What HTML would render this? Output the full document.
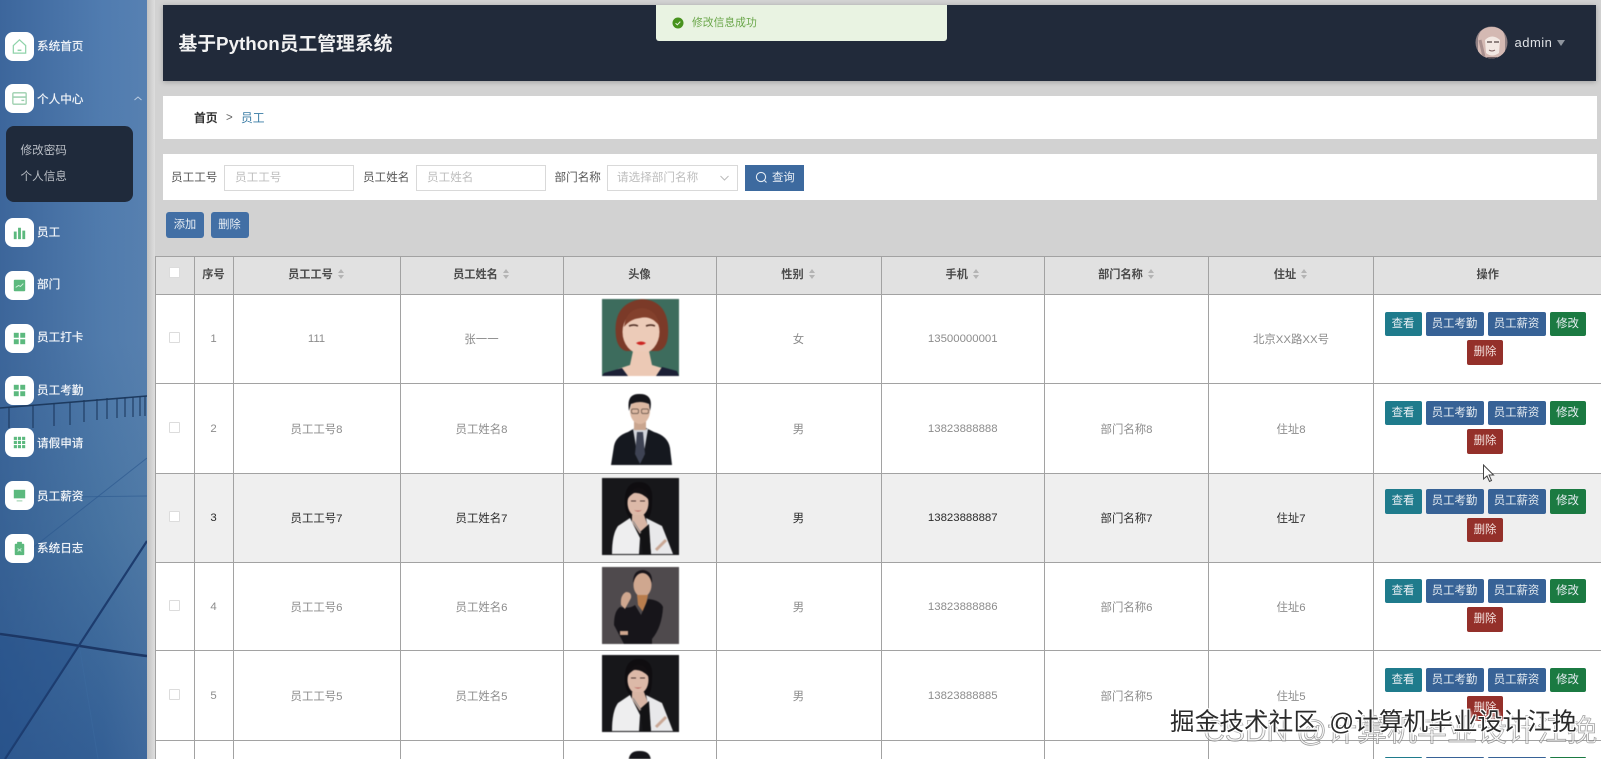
<!DOCTYPE html>
<html lang="zh">
<head>
<meta charset="utf-8">
<title>基于Python员工管理系统</title>
<style>
*{box-sizing:border-box}
html,body{margin:0;padding:0;width:1601px;height:759px;overflow:hidden;background:#d2d2d2}
body{font-family:"Liberation Sans","Noto Sans CJK SC",sans-serif;position:relative}
#all{position:absolute;left:0;top:0;width:1601px;height:759px;overflow:hidden;filter:blur(.35px)}
.abs{position:absolute}
#side{position:absolute;left:0;top:0;width:147px;height:759px;background:linear-gradient(90deg,rgba(45,85,140,.55) 0%,rgba(90,130,175,.1) 70%,rgba(110,145,185,.25) 100%),linear-gradient(180deg,#4f7bb0 0%,#4f7aab 45%,#44719f 70%,#2f5b92 100%)}
#band{position:absolute;left:147px;top:0;width:8px;height:759px;background:linear-gradient(90deg,#c2c2c2,#dedede)}
.ic{position:absolute;left:5px;width:29px;height:29px;background:#fff;border-radius:8px}
.ic svg{position:absolute;left:5px;top:5px;width:19px;height:19px}
.nv{position:absolute;left:37px;font-size:11.6px;color:#f2f5f9;line-height:16px;white-space:nowrap;text-shadow:0 0 .6px #f2f5f9}
#sub{position:absolute;left:5.5px;top:125.5px;width:127.5px;height:76.5px;background:#1f2a3b;border-radius:8px}
#sub div{position:absolute;left:15px;font-size:11.6px;color:#b9bec5;line-height:16px}
#hd{position:absolute;left:163px;top:5px;width:1433px;height:76px;background:#212a3a;box-shadow:0 1px 5px rgba(0,0,0,.25)}
#hd .t{position:absolute;left:15.5px;top:26.5px;font-size:18.8px;font-weight:bold;color:#f2f2f2;line-height:24px;white-space:nowrap}
#toast{position:absolute;left:656px;top:5px;width:291px;height:36px;background:#e9f3e2;border-radius:0 0 3px 3px}
#toast .tx{position:absolute;left:36px;top:11px;font-size:10.8px;color:#6ba74b;line-height:15px}
#bc{position:absolute;left:163px;top:96px;width:1434px;height:43px;background:#fff}
#sr{position:absolute;left:163px;top:154px;width:1434px;height:46px;background:#fff}
.lb{position:absolute;top:170px;font-size:11.6px;line-height:16px;color:#555}
.ip{position:absolute;top:164.5px;height:26px;width:130px;background:#fff;border:1px solid #d9d9d9;font-size:11.6px;color:#bdbdbd;line-height:24px;padding-left:10px;white-space:nowrap}
.pb{position:absolute;top:211.5px;width:38px;height:26px;background:#426fa5;color:#e9eff5;font-size:11.2px;line-height:26px;text-align:center;border-radius:3px}
#tw{position:absolute;left:155px;top:256px;width:1446px;height:503px;overflow:hidden}
table{position:absolute;left:0;top:0;border-collapse:collapse;table-layout:fixed;width:1446px}
th,td{border:1px solid #a2a2a2;text-align:center;padding:0;font-size:11.4px;color:#8c8c8c;font-weight:normal}
th{height:38px;background:#e1e1e1;color:#4a4a4a;font-weight:bold;font-size:11.2px;padding-bottom:3px}
td{background:#fff;vertical-align:middle}
tr.h td{background:#efefef;color:#2b2b2b}
.cb{display:inline-block;width:11px;height:11px;border:1px solid #dcdcdc;background:#fff;border-radius:1px}
.car{display:inline-block;width:7px;height:10px;margin-left:5px;vertical-align:-1px;position:relative}
.car:before{content:"";position:absolute;left:0;top:0;border:3.5px solid transparent;border-top:0;border-bottom:4px solid #b4b4b4}
.car:after{content:"";position:absolute;left:0;bottom:0;border:3.5px solid transparent;border-bottom:0;border-top:4px solid #b4b4b4}
td.pic{vertical-align:top;padding-top:4px}
td.pic svg{display:block;margin:0 auto;width:77px;height:77px;filter:blur(.5px);position:relative;left:1px}
td.op{vertical-align:top;text-align:left}
.ops{width:222px;display:flex;flex-wrap:wrap;justify-content:center;gap:4px 4px}
.b{height:24.5px;line-height:24px;text-align:center;font-size:11.4px;color:#e8eef3;border-radius:2px;white-space:nowrap}
.v{width:37px;background:#1f7b8c}
.k{width:58px;background:#376296}
.e{width:36px;background:#1b7a42}
.d{width:36px;background:#94302a;color:#f3dfdc}
.wm{position:absolute;white-space:nowrap}
tr.last td{height:18px;vertical-align:top;border-bottom:0;padding:0;line-height:0;font-size:0}
tr.last td.pic svg{height:14px;margin-top:4px}
tr.last .ops{padding-top:16px}
tr.last .b{height:1px;border-radius:2px 2px 0 0}
</style>
</head>
<body>
<div id="all">
<div id="side">
<svg class="abs" style="left:0;top:0" width="147" height="759" viewBox="0 0 147 759">
<g stroke="#1d3a5f" fill="none">
<path d="M0 408 L147 396" stroke-width="1.6"/>
<path d="M9 407V428M33 405V428M54 403V426M70 402V425M84 400V422M97 399V420M107 398V419M117 398V418M125 397V417M133 397V417M140 396V416M145 396V416" stroke-width="1.3" opacity=".85"/>
<path d="M0 634 C60 642 100 650 147 656" stroke="#1c3765" stroke-width="2.6"/>
<path d="M5 759 L147 541" stroke="#1d3c6e" stroke-width="2.2"/>
<path d="M30 550 L147 458" stroke="#2d5a90" stroke-width="1" opacity=".7"/>
<path d="M60 497 L147 496" stroke="#2d5a90" stroke-width="1" opacity=".6"/>
<path d="M80 650 L98 759" stroke="#3f6ea3" stroke-width="1" opacity=".4"/>
</g>
<path d="M0 636 L78 646 L5 759 H0Z" fill="#1f4a85" opacity=".3"/>
</svg>

<div class="ic" style="top:32px"><svg viewBox="0 0 20 20" fill="none" stroke="#8fd3aa" stroke-width="1.3"><path d="M3.5 9 L10 3 L16.5 9 V17 H3.5 Z"/><path d="M8 14h4" stroke-width="1.6"/></svg></div>
<div class="nv" style="top:39px">系统首页</div>

<div class="ic" style="top:84px"><svg viewBox="0 0 20 20" fill="none" stroke="#9ccfae" stroke-width="1.4"><rect x="3" y="4" width="14" height="12" rx="1"/><path d="M3 8.5h14" stroke-width="1.6"/><path d="M12 12h3"/></svg></div>
<div class="nv" style="top:92px">个人中心</div>
<svg class="abs" style="left:133px;top:95px" width="10" height="7" viewBox="0 0 10 7" fill="none" stroke="#b9cbe0" stroke-width="1"><path d="M1.5 5 L5 2 L8.5 5"/></svg>

<div id="sub"><div style="top:17px">修改密码</div><div style="top:43px">个人信息</div></div>

<div class="ic" style="top:218px"><svg viewBox="0 0 20 20" fill="#5cb97e"><rect x="4" y="9" width="3" height="8"/><rect x="8.5" y="5" width="3" height="12"/><rect x="13" y="8" width="3" height="9"/></svg></div>
<div class="nv" style="top:225px">员工</div>

<div class="ic" style="top:271px"><svg viewBox="0 0 20 20"><rect x="4" y="4" width="12" height="12" rx="1" fill="#5cb97e"/><path d="M6 12l3-2 2 1 3-3" stroke="#d8f0e0" fill="none" stroke-width="1"/></svg></div>
<div class="nv" style="top:277px">部门</div>

<div class="ic" style="top:324px"><svg viewBox="0 0 20 20" fill="#5cb97e"><rect x="4" y="4" width="5.2" height="5.2"/><rect x="10.8" y="4" width="5.2" height="5.2"/><rect x="4" y="10.8" width="5.2" height="5.2"/><rect x="10.8" y="10.8" width="5.2" height="5.2"/></svg></div>
<div class="nv" style="top:330px">员工打卡</div>

<div class="ic" style="top:376px"><svg viewBox="0 0 20 20" fill="#5cb97e"><rect x="4" y="4" width="5.2" height="5.2"/><rect x="10.8" y="4" width="5.2" height="5.2"/><rect x="4" y="10.8" width="5.2" height="5.2"/><rect x="10.8" y="10.8" width="5.2" height="5.2"/></svg></div>
<div class="nv" style="top:383px">员工考勤</div>

<div class="ic" style="top:428px"><svg viewBox="0 0 20 20" fill="#5cb97e"><rect x="4" y="4" width="3.3" height="3.3"/><rect x="8.3" y="4" width="3.3" height="3.3"/><rect x="12.7" y="4" width="3.3" height="3.3"/><rect x="4" y="8.3" width="3.3" height="3.3"/><rect x="8.3" y="8.3" width="3.3" height="3.3"/><rect x="12.7" y="8.3" width="3.3" height="3.3"/><rect x="4" y="12.7" width="3.3" height="3.3"/><rect x="8.3" y="12.7" width="3.3" height="3.3"/><rect x="12.7" y="12.7" width="3.3" height="3.3"/></svg></div>
<div class="nv" style="top:436px">请假申请</div>

<div class="ic" style="top:481px"><svg viewBox="0 0 20 20" fill="#5cb97e"><rect x="4" y="4" width="12" height="9"/><rect x="7" y="15" width="6" height="1.3" fill="#a8d8b8"/></svg></div>
<div class="nv" style="top:489px">员工薪资</div>

<div class="ic" style="top:534px"><svg viewBox="0 0 20 20"><rect x="5" y="5" width="10" height="12" rx="1" fill="#5cb97e"/><rect x="7.5" y="3" width="5" height="3" fill="#5cb97e"/><path d="M8 10l4 3M12 10l-4 3" stroke="#cfeedd" stroke-width=".9"/></svg></div>
<div class="nv" style="top:541px">系统日志</div>
</div>
<div id="band"></div>

<div id="hd">
<div class="t">基于Python员工管理系统</div>
<svg class="abs" style="left:1312px;top:21px" width="33" height="33" viewBox="0 0 33 33">
<defs><clipPath id="av"><circle cx="16.5" cy="16.5" r="16"/></clipPath></defs>
<g clip-path="url(#av)"><rect width="33" height="33" fill="#8f7f82"/><path d="M3 33 V12 Q5 1 17 1 Q29 1 30 12 V33Z" fill="#d4b9b3"/><path d="M10 14 Q17 7 25 14 L24 27 Q17 32 11 27Z" fill="#f2e8e3"/><path d="M12 16h5M19 16h5" stroke="#6e6060" stroke-width="1.5"/><path d="M14 24q3 2 6 0" stroke="#7a5a5a" fill="none"/><path d="M5 14 L9 31" stroke="#a88f8e" stroke-width="3"/><path d="M12 31h10v3h-10z" fill="#6a5c60"/></g>
</svg>
<div class="abs" style="left:1351.5px;top:29px;font-size:13px;letter-spacing:.5px;color:#dfe2e6;line-height:18px">admin</div>
<div class="abs" style="left:1393.5px;top:35px;border:4.5px solid transparent;border-top:6px solid #8f959e;border-bottom:0;width:0;height:0"></div>
</div>

<div id="toast">
<svg class="abs" style="left:16px;top:12px" width="12" height="12" viewBox="0 0 12 12"><circle cx="6" cy="6" r="5.5" fill="#47921d"/><path d="M3.6 6.2l1.7 1.6 3-3.2" stroke="#e9f3e2" stroke-width="1" fill="none"/></svg>
<div class="tx">修改信息成功</div>
</div>

<div id="bc">
<div class="abs" style="left:31px;top:14px;font-size:11.8px;font-weight:bold;color:#333;line-height:16px">首页</div>
<div class="abs" style="left:63px;top:14px;font-size:11.5px;color:#666;line-height:16px">&gt;</div>
<div class="abs" style="left:78px;top:14px;font-size:11.8px;color:#3a7ca5;line-height:16px">员工</div>
</div>

<div id="sr"></div>
<div class="lb" style="left:171px">员工工号</div>
<div class="ip" style="left:224px">员工工号</div>
<div class="lb" style="left:363px">员工姓名</div>
<div class="ip" style="left:416px">员工姓名</div>
<div class="lb" style="left:554.5px">部门名称</div>
<div class="ip" style="left:607px;width:131px;padding-left:9px">请选择部门名称</div>
<svg class="abs" style="left:719px;top:174px" width="11" height="8" viewBox="0 0 11 8" fill="none" stroke="#bbb" stroke-width="1"><path d="M1.5 2 L5.5 6 L9.5 2"/></svg>
<div class="abs" style="left:745px;top:164.5px;width:59px;height:26px;background:#3d6a9f"></div>
<svg class="abs" style="left:755px;top:171px" width="13" height="13" viewBox="0 0 13 13" fill="none" stroke="#e4ecf4" stroke-width="1.1"><circle cx="6" cy="6" r="4.6"/><path d="M9.5 9.5L11.5 11.5"/></svg>
<div class="abs" style="left:772px;top:170px;font-size:11.4px;color:#e8eef5;line-height:16px">查询</div>

<div class="pb" style="left:166px">添加</div>
<div class="pb" style="left:210.5px">删除</div>

<svg width="0" height="0" style="position:absolute">
<defs>
<symbol id="woman3" viewBox="0 0 77 77">
<rect width="77" height="77" fill="#17171a"/>
<path d="M23 28 Q21 4 37 4 Q52 4 50 24 Q50 36 46 41 L28 40 Q24 36 23 28Z" fill="#0f0d10"/>
<ellipse cx="36" cy="25" rx="10.5" ry="14" fill="#dcb9a8"/>
<path d="M25 22 Q28 9 38 10 Q46 11 47 22 Q40 14 32 15 Q28 17 25 22Z" fill="#120f12"/>
<path d="M29 23h5M38 23h5" stroke="#4a3430" stroke-width="1"/>
<path d="M32 32q4 1.5 8 0q-4 3-8 0Z" fill="#a8393a"/>
<path d="M30 37 H42 L46 48 L38 56 L30 44Z" fill="#d8b5a4"/>
<path d="M10 76 Q10 56 16 48 L28 40 L38 60 L37 76Z" fill="#eeeeef"/>
<path d="M44 40 L60 48 Q64 58 71 76 L49 76 L47 54Z" fill="#e8e8ea"/>
<path d="M38 54 L47 46 L49 76 L41 76Z" fill="#121214"/>
<path d="M54 72 Q60 66 64 62" stroke="#c9a895" stroke-width="3" fill="none"/>
<path d="M31 43 L39 55" stroke="#8a8a8a" stroke-width="1"/>
</symbol>
<symbol id="man" viewBox="0 0 77 77">
<rect width="77" height="77" fill="#fff"/>
<path d="M9 77 L12 58 Q14 48 26 44 L33 40 H44 L52 44 Q66 48 68 60 L70 77Z" fill="#15181f"/>
<path d="M31 41 L46 41 L41 70 L36 70Z" fill="#d3d6dc"/>
<path d="M35 44 L41 44 L43 66 L38 76 L33 66Z" fill="#3e4354"/>
<rect x="32" y="30" width="12" height="12" fill="#c9a58f"/>
<ellipse cx="38" cy="23" rx="10" ry="13" fill="#dcb8a2"/>
<path d="M27 23 Q24 5 38 6 Q52 6 48 23 L47 16 Q38 12 29 16Z" fill="#15151a"/>
<rect x="29.5" y="21" width="7" height="4.5" rx="1.5" fill="none" stroke="#5a4a40" stroke-width=".7"/>
<rect x="39.5" y="21" width="7" height="4.5" rx="1.5" fill="none" stroke="#5a4a40" stroke-width=".7"/>
</symbol>
</defs>
</svg>

<div id="tw">
<table>
<colgroup><col style="width:38.5px"><col style="width:39px"><col style="width:167px"><col style="width:163px"><col style="width:153px"><col style="width:165px"><col style="width:163.5px"><col style="width:164px"><col style="width:165px"><col style="width:228.5px"></colgroup>
<tr>
<th><span class="cb"></span></th><th>序号</th><th>员工工号<span class="car"></span></th><th>员工姓名<span class="car"></span></th><th>头像</th><th>性别<span class="car"></span></th><th>手机<span class="car"></span></th><th>部门名称<span class="car"></span></th><th>住址<span class="car"></span></th><th>操作</th>
</tr>
<tr style="height:89px">
<td><span class="cb"></span></td><td>1</td><td>111</td><td>张一一</td>
<td class="pic"><svg viewBox="0 0 77 77"><rect width="77" height="77" fill="#3d6c5d"/><path d="M14 38 Q10 4 40 0 Q68 2 66 36 Q65 50 56 52 L24 52 Q16 50 14 38Z" fill="#7b3a28"/><ellipse cx="39" cy="33" rx="18.5" ry="22" fill="#eccbb8"/><path d="M22 28 Q24 10 40 9 Q55 10 58 28 Q50 16 38 19 Q28 20 22 28Z" fill="#83402c"/><path d="M27 27q5-2 9 0M44 27q5-2 9 0" stroke="#4a2a20" stroke-width="1.5" fill="none"/><path d="M34 44q5-3 10 0q-5 4-10 0Z" fill="#cc2420"/><path d="M31 52 H47 L50 66 L63 70 L70 77 H8 L16 70 L28 66Z" fill="#ecc9b5"/><path d="M0 77 L2 74 L20 69 L26 77ZM77 77 L75 72 L60 68 L54 77Z" fill="#1c2036"/></svg></td>
<td>女</td><td>13500000001</td><td></td><td>北京XX路XX号</td>
<td class="op" style="padding-top:16.5px"><div class="ops"><span class="b v">查看</span><span class="b k">员工考勤</span><span class="b k">员工薪资</span><span class="b e">修改</span><span class="b d">删除</span></div></td>
</tr>
<tr style="height:90px">
<td><span class="cb"></span></td><td>2</td><td>员工工号8</td><td>员工姓名8</td>
<td class="pic"><svg viewBox="0 0 77 77"><use href="#man"/></svg></td>
<td>男</td><td>13823888888</td><td>部门名称8</td><td>住址8</td>
<td class="op" style="padding-top:16.5px"><div class="ops"><span class="b v">查看</span><span class="b k">员工考勤</span><span class="b k">员工薪资</span><span class="b e">修改</span><span class="b d">删除</span></div></td>
</tr>
<tr class="h" style="height:89px">
<td><span class="cb"></span></td><td>3</td><td>员工工号7</td><td>员工姓名7</td>
<td class="pic"><svg viewBox="0 0 77 77"><use href="#woman3"/></svg></td>
<td>男</td><td>13823888887</td><td>部门名称7</td><td>住址7</td>
<td class="op" style="padding-top:15px"><div class="ops"><span class="b v">查看</span><span class="b k">员工考勤</span><span class="b k">员工薪资</span><span class="b e">修改</span><span class="b d">删除</span></div></td>
</tr>
<tr style="height:88px">
<td><span class="cb"></span></td><td>4</td><td>员工工号6</td><td>员工姓名6</td>
<td class="pic"><svg viewBox="0 0 77 77"><rect width="77" height="77" fill="#4f4a4d"/><path d="M31 16 Q31 3 41 3 Q51 4 50 16 L47 10 L34 10Z" fill="#19151a"/><ellipse cx="40.5" cy="18" rx="9" ry="12" fill="#cfa78f"/><path d="M35 28 H46 L42 46 L36 38Z" fill="#b97d4d"/><path d="M22 77 L12 58 Q12 44 18 40 Q28 42 33 38 L39 48 L46 32 Q58 33 61 40 Q60 60 50 72 L50 77Z" fill="#17151a"/><path d="M19 38 Q18 28 24 25 Q30 25 29 31 L23 42Z" fill="#cfa78f"/><path d="M18 64 h8 v4 h-8Z" fill="#cfa78f"/></svg></td>
<td>男</td><td>13823888886</td><td>部门名称6</td><td>住址6</td>
<td class="op" style="padding-top:15.5px"><div class="ops"><span class="b v">查看</span><span class="b k">员工考勤</span><span class="b k">员工薪资</span><span class="b e">修改</span><span class="b d">删除</span></div></td>
</tr>
<tr style="height:90px">
<td><span class="cb"></span></td><td>5</td><td>员工工号5</td><td>员工姓名5</td>
<td class="pic"><svg viewBox="0 0 77 77"><use href="#woman3"/></svg></td>
<td>男</td><td>13823888885</td><td>部门名称5</td><td>住址5</td>
<td class="op" style="padding-top:16.5px"><div class="ops"><span class="b v">查看</span><span class="b k">员工考勤</span><span class="b k">员工薪资</span><span class="b e">修改</span><span class="b d">删除</span></div></td>
</tr>
<tr class="last">
<td></td><td></td><td></td><td></td>
<td class="pic" style="padding-top:0"><svg viewBox="0 0 77 14"><use href="#man" width="77" height="77"/></svg></td>
<td></td><td></td><td></td><td></td>
<td class="op"><div class="ops"><span class="b v"></span><span class="b k"></span><span class="b k"></span><span class="b e"></span></div></td>
</tr>
</table>
</div>

<svg class="abs" style="left:1482px;top:464px" width="13" height="19" viewBox="0 0 13 19"><path d="M1.5 1 V15 L5 12 L7.5 17.5 L9.5 16.5 L7 11 H11.5Z" fill="#fff" stroke="#444" stroke-width="1"/></svg>

<div class="wm" style="right:4px;top:717px;height:30px;font-size:30px;line-height:30px;color:rgba(240,240,240,.55);-webkit-text-stroke:.7px rgba(120,120,120,.75)">CSDN @计算机毕业设计江挽</div>
<div class="wm" style="left:1170px;top:709px;font-size:24.5px;line-height:28px;letter-spacing:.2px;word-spacing:4px;color:#2b2b2b;text-shadow:1px 1px 0 #fff,-1px -1px 0 #fff,1px -1px 0 #fff,-1px 1px 0 #fff,2px 2px 2px rgba(255,255,255,.7)">掘金技术社区 @计算机毕业设计江挽</div>
</div>
</body>
</html>
